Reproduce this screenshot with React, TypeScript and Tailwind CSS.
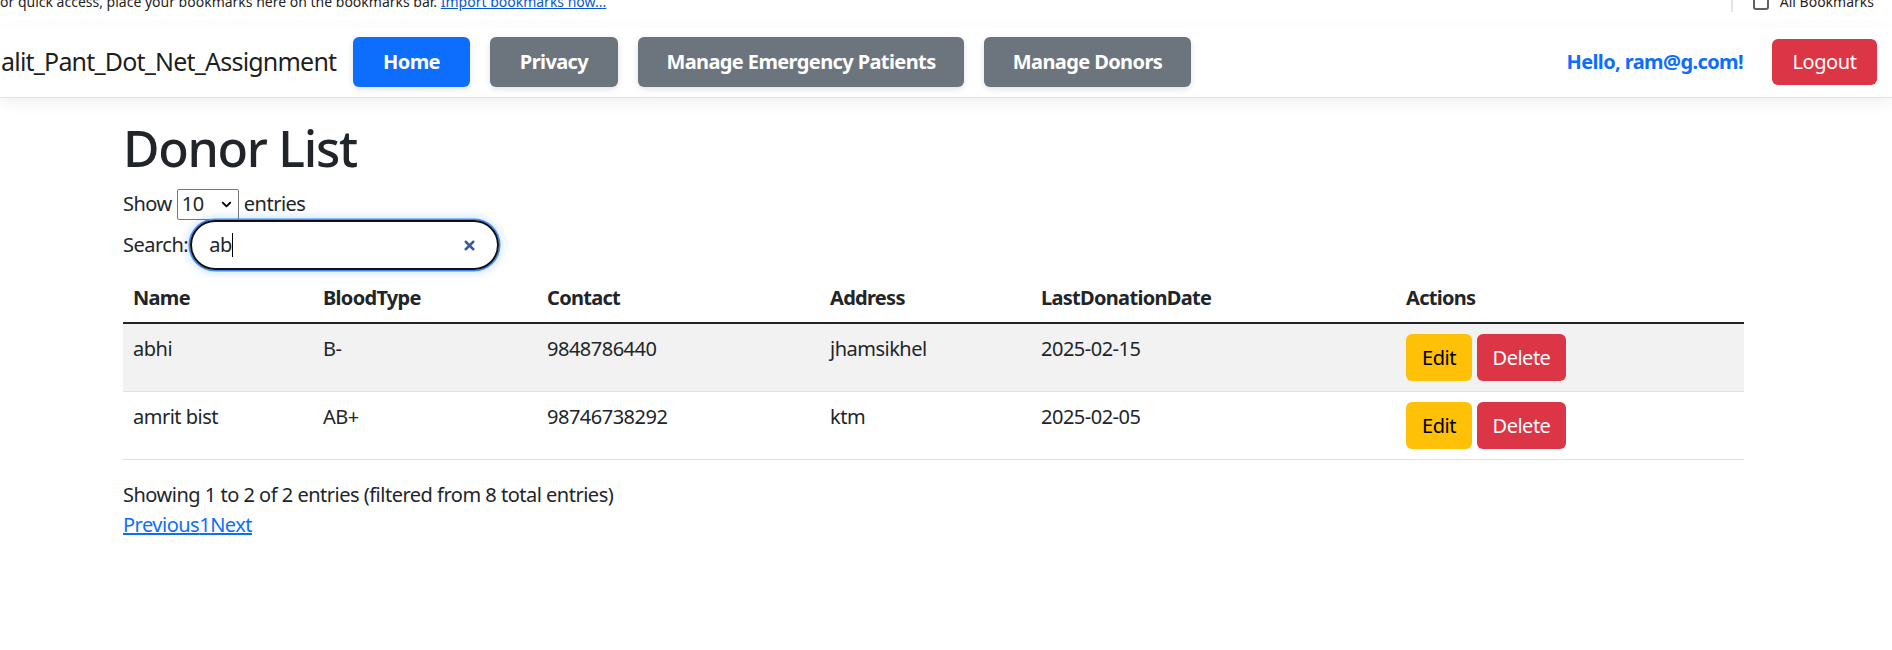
import React from 'react';
import { ChevronDown, X } from 'lucide-react';

const donors = [
  { name: 'abhi', bloodType: 'B-', contact: '9848786440', address: 'jhamsikhel', lastDonation: '2025-02-15' },
  { name: 'amrit bist', bloodType: 'AB+', contact: '98746738292', address: 'ktm', lastDonation: '2025-02-05' },
];

const columns = ['Name', 'BloodType', 'Contact', 'Address', 'LastDonationDate', 'Actions'];

const App = () => {
  return (
    <div className="min-h-screen bg-white text-[#212529] font-['Noto_Sans',sans-serif]">
      {/* browser bookmarks bar, mostly scrolled out of view */}
      <div className="h-[27px] overflow-hidden flex items-start text-[14px] leading-[16px] text-[#1f1f1f]">
        <div className="h-[12px] overflow-hidden flex-1">
          <div className="-mt-[6px] whitespace-nowrap">
            or quick access, place your bookmarks here on the bookmarks bar.{' '}
            <span className="text-[#0b57d0] underline">Import bookmarks now...</span>
          </div>
        </div>
        <div className="h-[12px] overflow-hidden flex items-start pr-[18px]">
          <div className="w-[2px] h-[12px] bg-[#e3e3e3] mr-[20px]" />
          <div className="w-[16px] h-[14px] border-2 border-[#5f6368] rounded-[3px] mr-[11px] -mt-[4px]" />
          <span className="whitespace-nowrap -mt-[6px]">All Bookmarks</span>
        </div>
      </div>

      {/* navbar */}
      <nav className="h-[71px] flex items-center border-b border-[#dee2e6] shadow-[0_5px_15px_rgba(0,0,0,0.06)] pr-[15px]">
        <span className="text-[25px] tracking-[-0.8px] text-[#000000e6] pl-[1px] whitespace-nowrap w-[333px]">alit_Pant_Dot_Net_Assignment</span>
        <div className="flex gap-[20px] ml-[20px] tracking-[-0.6px]">
          <a className="w-[117px] h-[50px] flex items-center justify-center rounded-[6px] bg-[#0d6efd] text-white font-bold text-[20px] shadow-[0_2px_6px_rgba(0,0,0,0.12)]">Home</a>
          <a className="w-[128px] h-[50px] flex items-center justify-center rounded-[6px] bg-[#6c757d] text-white font-bold text-[20px] shadow-[0_2px_6px_rgba(0,0,0,0.12)]">Privacy</a>
          <a className="w-[326px] h-[50px] flex items-center justify-center rounded-[6px] bg-[#6c757d] text-white font-bold text-[20px] shadow-[0_2px_6px_rgba(0,0,0,0.12)] whitespace-nowrap">Manage Emergency Patients</a>
          <a className="w-[207px] h-[50px] flex items-center justify-center rounded-[6px] bg-[#6c757d] text-white font-bold text-[20px] shadow-[0_2px_6px_rgba(0,0,0,0.12)] whitespace-nowrap">Manage Donors</a>
        </div>
        <div className="ml-auto flex items-center gap-[29px]">
          <span className="text-[#0d6efd] font-bold text-[20px] tracking-[-0.6px] whitespace-nowrap">Hello, ram@g.com!</span>
          <button className="w-[105px] h-[46px] rounded-[6px] bg-[#dc3545] text-white text-[20px] tracking-[-0.4px]">Logout</button>
        </div>
      </nav>

      <main className="pl-[123px] w-[1744px] pt-[20px] tracking-[-0.5px]">
        <h1 className="text-[50px] leading-[60px] font-medium tracking-[-1.3px] mb-[10px]">Donor List</h1>

        <div className="flex items-center h-[32px] text-[20px] leading-[30px]">
          <span>Show</span>
          <div className="ml-[5px] w-[62px] h-[31px] border border-[#767676] rounded-[2px] flex items-center justify-between pl-[4px] pr-[4px]">
            <span className="text-[20px] leading-[28px]">10</span>
            <ChevronDown className="w-[15px] h-[15px] text-black" strokeWidth={3} />
          </div>
          <span className="ml-[5px]">entries</span>
        </div>

        <div className="flex items-center h-[50px] text-[20px]">
          <span>Search:</span>
          <div className="ml-[2px] w-[309px] h-[50px] rounded-full border-2 border-[#111] shadow-[0_0_0_1.5px_#3d8bfd,0_0_8px_3px_rgba(13,110,253,0.2)] flex items-center pl-[17px] pr-[20px]">
            <span className="flex-1 flex items-center text-[20px]">
              ab<span className="w-[1px] h-[24px] bg-black inline-block" />
            </span>
            <X className="w-[15px] h-[15px] text-[#3c5a99]" strokeWidth={4} />
          </div>
        </div>

        <div className="mt-[4px] text-[20px]">
          <div className="grid grid-cols-[190px_224px_283px_211px_365px_348px] border-b-2 border-[#212529] tracking-[-0.7px]">
            {columns.map((col) => (
              <div key={col} className="px-[10px] py-[9px] leading-[30px] font-bold">{col}</div>
            ))}
          </div>
          {donors.map((d, i) => (
            <div
              key={d.name}
              className={`grid grid-cols-[190px_224px_283px_211px_365px_348px] border-b border-[#dee2e6] ${i % 2 === 0 ? 'bg-[#f2f2f2]' : 'bg-white'}`}
            >
              <div className="px-[10px] py-[10px] leading-[30px]">{d.name}</div>
              <div className="px-[10px] py-[10px] leading-[30px]">{d.bloodType}</div>
              <div className="px-[10px] py-[10px] leading-[30px]">{d.contact}</div>
              <div className="px-[10px] py-[10px] leading-[30px]">{d.address}</div>
              <div className="px-[10px] py-[10px] leading-[30px]">{d.lastDonation}</div>
              <div className="px-[10px] py-[10px] flex gap-[5px]">
                <button className="w-[66px] h-[47px] rounded-[6px] bg-[#ffc107] text-black text-[20px]">Edit</button>
                <button className="w-[89px] h-[47px] rounded-[6px] bg-[#dc3545] text-white text-[20px]">Delete</button>
              </div>
            </div>
          ))}
        </div>

        <div className="mt-[20px] text-[20px] leading-[30px]">
          Showing 1 to 2 of 2 entries (filtered from 8 total entries)
        </div>
        <div className="text-[20px] leading-[30px]">
          <a className="text-[#0d6efd] underline">Previous</a>
          <a className="text-[#0d6efd] underline">1</a>
          <a className="text-[#0d6efd] underline">Next</a>
        </div>
      </main>
    </div>
  );
};

export default App;
